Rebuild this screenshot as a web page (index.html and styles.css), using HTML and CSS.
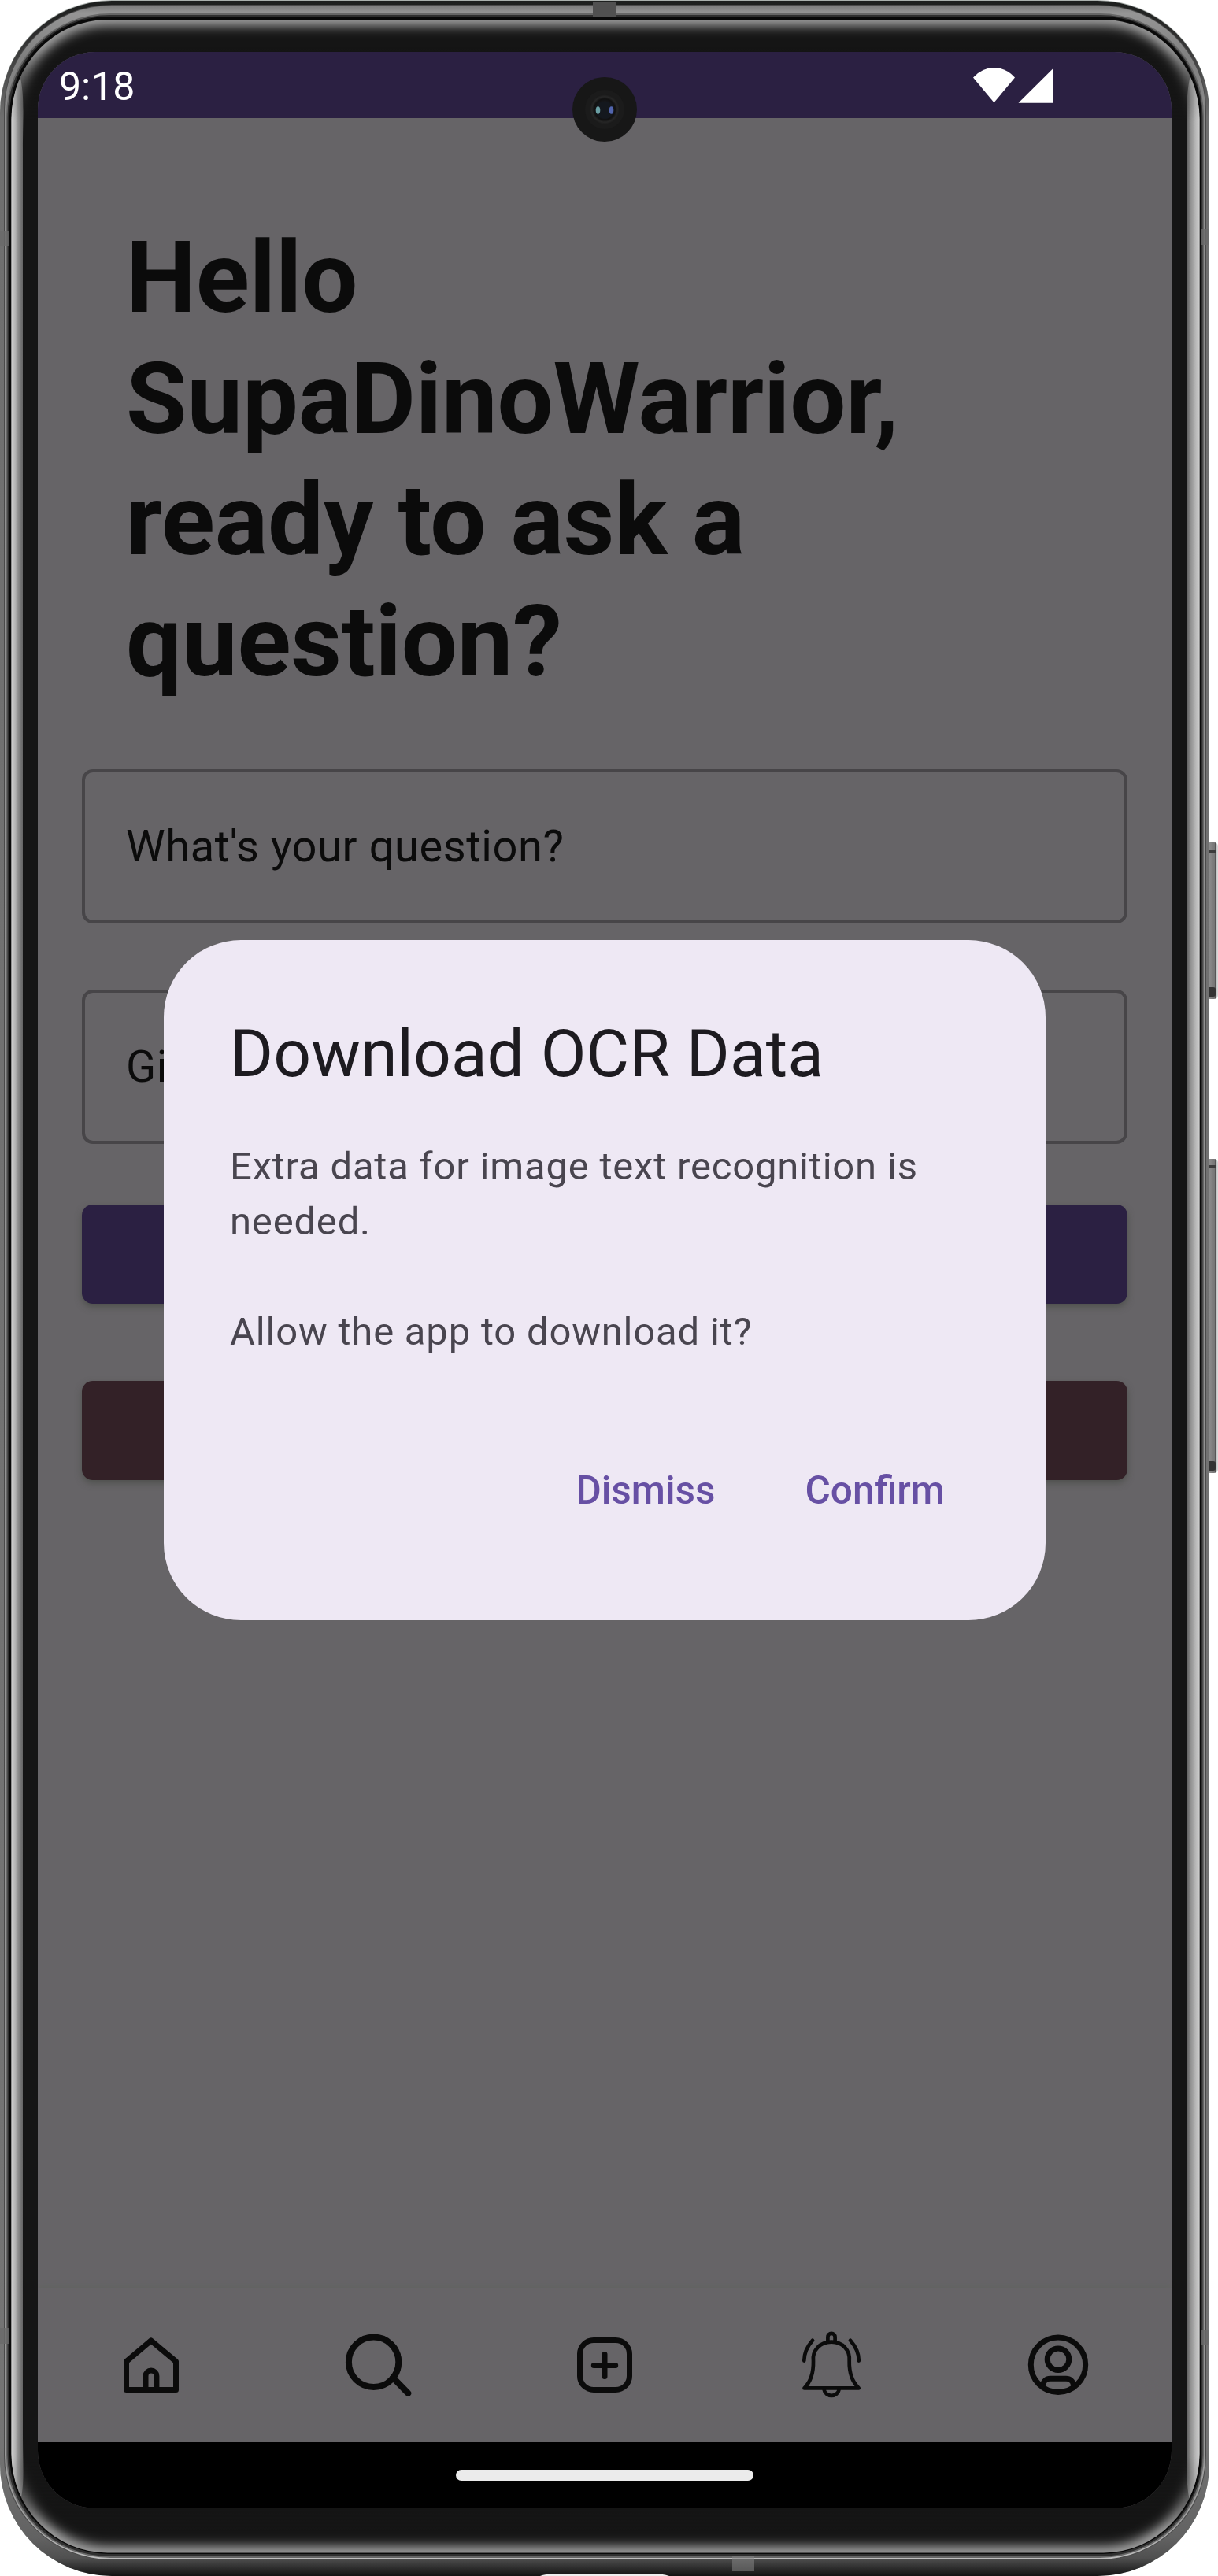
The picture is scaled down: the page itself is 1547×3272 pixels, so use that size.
FILE: index.html
```html
<!DOCTYPE html>
<html lang="en">
<head>
<meta charset="utf-8">
<title>Ask a question</title>
<link rel="stylesheet" href="styles.css">
</head>
<body>
<div class="device">
  <svg class="bezel" viewBox="0 0 1547 3272" aria-hidden="true">
    <defs>
      <linearGradient id="rim" x1="0" y1="0" x2="0" y2="1">
        <stop offset="0" stop-color="#1d1f1e"/><stop offset=".012" stop-color="#2b2b2b"/><stop offset=".045" stop-color="#6f6f6f"/>
        <stop offset=".95" stop-color="#747474"/><stop offset=".985" stop-color="#626262"/><stop offset=".993" stop-color="#505050"/><stop offset="1" stop-color="#121212"/>
      </linearGradient>
      <linearGradient id="band" x1="0" y1="0" x2="0" y2="1">
        <stop offset="0" stop-color="#7c7c7c"/><stop offset=".003" stop-color="#959595"/><stop offset=".02" stop-color="#808080"/><stop offset=".05" stop-color="#8e8e8e"/>
        <stop offset=".95" stop-color="#969696"/><stop offset=".985" stop-color="#a0a0a0"/><stop offset="1" stop-color="#bdbdbd"/>
      </linearGradient>
      <linearGradient id="left" x1="0" x2="1"><stop offset="0" stop-color="#d2d2d2"/><stop offset=".35" stop-color="#b4b4b4"/><stop offset=".6" stop-color="#8b8b8b"/><stop offset="1" stop-color="#606060"/></linearGradient>
      <linearGradient id="right" x1="0" x2="1"><stop offset="0" stop-color="#5f5f5f"/><stop offset=".3" stop-color="#909090"/><stop offset=".7" stop-color="#bababa"/><stop offset="1" stop-color="#d0d0d0"/></linearGradient>
      <linearGradient id="key" x1="0" x2="1"><stop offset="0" stop-color="#4c4c4c"/><stop offset=".25" stop-color="#8c8c8c"/><stop offset=".7" stop-color="#777"/><stop offset=".8" stop-color="#454545"/><stop offset=".9" stop-color="#c8c8c8"/><stop offset="1" stop-color="#ddd"/></linearGradient>
      <linearGradient id="fade" x1="0" y1="0" x2="0" y2="1"><stop offset="0" stop-color="#000"/><stop offset=".03" stop-color="#fff"/><stop offset=".97" stop-color="#fff"/><stop offset="1" stop-color="#000"/></linearGradient>
      <mask id="sides" maskUnits="userSpaceOnUse" x="0" y="60" width="1547" height="3155"><rect x="0" y="60" width="1547" height="3155" fill="url(#fade)"/></mask>
      <clipPath id="glass"><rect x="14.5" y="25" width="1509" height="3217.500" rx="122" ry="126"/></clipPath>
      <filter id="soft" x="-5%" y="-5%" width="110%" height="110%"><feGaussianBlur stdDeviation="8"/></filter>
    </defs>
    <g class="keys">
      <rect x="1532" y="1070" width="15" height="199" rx="5" fill="url(#key)"/>
      <rect x="1536" y="1080" width="8" height="4" fill="#3b3b3b"/><rect x="1533" y="1254" width="11" height="12" rx="3" fill="#333"/>
      <rect x="1532" y="1472" width="15" height="399" rx="5" fill="url(#key)"/>
      <rect x="1536" y="1480" width="8" height="4" fill="#3b3b3b"/><rect x="1533" y="1856" width="11" height="12" rx="3" fill="#333"/>
    </g>
    <rect x="0" y="0" width="1536" height="3272" rx="142" ry="142" fill="#aab0ad"/>
    <rect x="0" y="1" width="1536" height="3271" rx="142" ry="142" fill="url(#rim)"/>
    <rect x="5" y="6" width="1527" height="3246" rx="137" ry="133" fill="#4a4a4a"/>
    <rect x="6" y="7" width="1525" height="3244" rx="136" ry="132" fill="url(#band)"/>
    <rect x="8" y="17" width="1521" height="3232" rx="132" ry="130" fill="#666"/>
    <rect x="9.500" y="19" width="1518" height="3228" rx="130" ry="129" fill="#2f2f2f"/>
    <rect x="12" y="21" width="1514" height="3223" rx="126" ry="127" fill="#090909"/>
    <g clip-path="url(#glass)">
      <rect x="14" y="24" width="1510" height="3220" fill="#151515"/>
      <rect x="14.500" y="23" width="1509" height="3221" rx="122" ry="126" fill="none" stroke="#c8c8c8" stroke-width="16" filter="url(#soft)"/>
      <g mask="url(#sides)">
        <rect x="24" y="60" width="1489" height="3155" fill="#151515"/>
        <path d="M14 60C34 110 29 130 29 190V3090C29 3150 34 3165 14 3215Z" fill="url(#left)"/>
        <path d="M1524 60C1503 110 1508 130 1508 190V3090C1508 3150 1503 3165 1524 3215Z" fill="url(#right)"/>
      </g>
    </g>
    <rect x="753" y="3" width="29" height="18" fill="#505050"/>
    <rect x="930" y="3246" width="28" height="20" fill="#858585" opacity=".55"/>
    <path d="M686 3272Q692 3269 710 3269H825Q843 3269 850 3272Z" fill="#eee"/>
    <g fill="#6a6a6a" opacity=".8"><rect x="0" y="293" width="12" height="20"/><rect x="1526" y="291" width="10" height="20"/><rect x="0" y="2957" width="12" height="20"/><rect x="1526" y="2959" width="10" height="20"/></g>
  </svg>

  <div class="screen">
    <header class="status">
      <span class="clock">9:18</span>
      <svg class="signals" width="104" height="48" viewBox="0 0 104 48" fill="#fff"><path d="M1 14.500Q12.500 2 27.500 2T54 14.500L27.500 46.300Z"/><path d="M58.500 46.700L102.800 2.700V46.700Z"/></svg>
    </header>
    <main class="page">
      <h1 class="greeting">Hello SupaDinoWarrior, ready to ask a question?</h1>
      <div class="field">What's your question?</div>
      <div class="field">Gi</div>
      <div class="button button-primary"></div>
      <div class="button button-danger"></div>
    </main>
    <nav class="tabs">
      <svg class="icon" viewBox="0 0 100 100" stroke-width="7"><path d="M18.500 81.500V45.500L49.800 19L81.500 45.500V81.500ZM43 81V64a6.900 6.900 0 0 1 13.900 0V81"/></svg>
      <svg class="icon" viewBox="0 0 100 100" stroke-width="8"><circle cx="44.600" cy="46.300" r="31.700"/><path d="M69 66L88.300 85.800"/></svg>
      <svg class="icon" viewBox="0 0 100 100" stroke-width="7"><rect x="18.500" y="18.500" width="63" height="63" rx="17.500"/><path d="M36.300 50.500H63.700M50 36.500V64.500"/></svg>
      <svg class="icon" viewBox="0 0 100 100" stroke-width="4.700"><path d="M15.500 79.400C24 71 27.300 59 27 45C25.300 31 36 20.700 50 20.700S74 31 72.700 45C72.400 59 76 71 84.800 79.400ZM45.400 20V14.500a4.500 4.500 0 0 1 9.200 0V20M40.500 81A9.700 9.200 0 0 0 59.700 81M15.300 44.600Q15.300 31 26 18.800M84.800 44.600Q84.800 31 74 18.800"/></svg>
      <svg class="icon" viewBox="0 0 100 100" stroke-width="7"><circle cx="50" cy="49.700" r="34.700"/><circle cx="50" cy="42.700" r="13.800"/><path d="M30.500 76C31 70.500 35 67.300 40 67.300H60C65 67.300 69 70.500 69.500 76"/></svg>
    </nav>
    <footer class="gesture"><span class="handle"></span></footer>

    <section class="dialog">
      <h2 class="dialog-title">Download OCR Data</h2>
      <p class="dialog-text">Extra data for image text recognition is needed.</p>
      <p class="dialog-text">Allow the app to download it?</p>
      <div class="actions"><span>Dismiss</span><span>Confirm</span></div>
    </section>

    <svg class="camera" viewBox="0 0 82 82">
      <defs><radialGradient id="lens"><stop offset="0" stop-color="#20242d"/><stop offset=".45" stop-color="#171a20"/><stop offset=".7" stop-color="#111"/><stop offset=".85" stop-color="#262626"/><stop offset="1" stop-color="#191919"/></radialGradient></defs>
      <circle cx="41" cy="41" r="41" fill="#171717"/><circle cx="41" cy="41" r="25" fill="#1b1b1b"/><circle cx="41" cy="41" r="19" fill="url(#lens)"/>
      <circle cx="41" cy="42" r="11" fill="#14181e"/><ellipse cx="32.500" cy="42" rx="2.800" ry="4.700" fill="#6a9fa4"/><ellipse cx="49.500" cy="42" rx="2.800" ry="4.700" fill="#5265ae"/>
    </svg>
  </div>
</div>
</body>
</html>
```
FILE: styles.css
```css
* { box-sizing: border-box; }

body {
  margin: 0;
  background: #fff;
  font-family: Roboto, "Liberation Sans", sans-serif;
}

.device {
  position: relative;
  width: 1547px;
  height: 3272px;
  padding: 66px 59px 86px 48px;
  overflow: hidden;
}

.bezel {
  position: absolute;
  inset: 0;
  width: 1547px;
  height: 3272px;
}

.screen {
  position: relative;
  display: flex;
  flex-direction: column;
  height: 3120px;
  overflow: hidden;
  border-radius: 73px;
  background: #666467;
}

.status {
  display: flex;
  flex: none;
  align-items: center;
  justify-content: space-between;
  height: 84px;
  padding: 0 149px 0 27px;
  background: #2b2042;
  color: #fff;
}

.clock {
  padding-top: 4px;
  font-size: 50px;
  line-height: 58px;
}

.page {
  display: flex;
  flex: 1;
  flex-direction: column;
  padding: 126px 56px 0;
}

.greeting {
  margin: 0 56px 85px;
  color: #0b0b0b;
  font-size: 126px;
  font-weight: 700;
  letter-spacing: -.12px;
  line-height: 154px;
}

.field {
  height: 196px;
  margin-bottom: 84px;
  padding: 0 52px;
  border: 4px solid #474548;
  border-radius: 14px;
  color: #0b0b0b;
  font-size: 56px;
  letter-spacing: .6px;
  line-height: 188px;
}

.button {
  height: 126px;
  margin-bottom: 98px;
  border-radius: 14px;
  box-shadow: 0 4px 8px rgba(60, 66, 56, .55);
}

.field + .button { margin-top: -7px; }

.button-primary { background: #2b2042; }

.button-danger { background: #332127; }

.tabs {
  display: grid;
  flex: none;
  grid-template-columns: repeat(5, 1fr);
  place-items: center;
  height: 196px;
  background: #666467;
  box-shadow: 0 -1px 6px rgba(96, 100, 92, .7);
}

.icon {
  width: 100px;
  height: 100px;
  fill: none;
  stroke: #0b0b0b;
  stroke-linecap: round;
  stroke-linejoin: round;
}

.gesture {
  display: flex;
  flex: none;
  align-items: center;
  justify-content: center;
  height: 84px;
  background: #000;
}

.handle {
  width: 378px;
  height: 14px;
  border-radius: 7px;
  background: #ebebeb;
}

.dialog {
  position: absolute;
  top: 1128px;
  left: 160px;
  width: 1120px;
  height: 864px;
  padding: 89px 84px 0;
  border-radius: 98px;
  background: #eee8f4;
}

.dialog-title {
  margin: 0 0 52px;
  color: #1d1b20;
  font-size: 84px;
  font-weight: 400;
  line-height: 112px;
}

.dialog-text {
  margin: 0 0 70px;
  color: #49454f;
  font-size: 49px;
  letter-spacing: .8px;
  line-height: 70px;
}

.actions {
  display: flex;
  justify-content: flex-end;
  gap: 114px;
  margin-top: 131px;
  padding-right: 44px;
  color: #6750a4;
  font-size: 49.5px;
  font-weight: 500;
  line-height: 70px;
}

.camera {
  position: absolute;
  top: 32px;
  left: 679px;
  width: 82px;
  height: 82px;
}
```
